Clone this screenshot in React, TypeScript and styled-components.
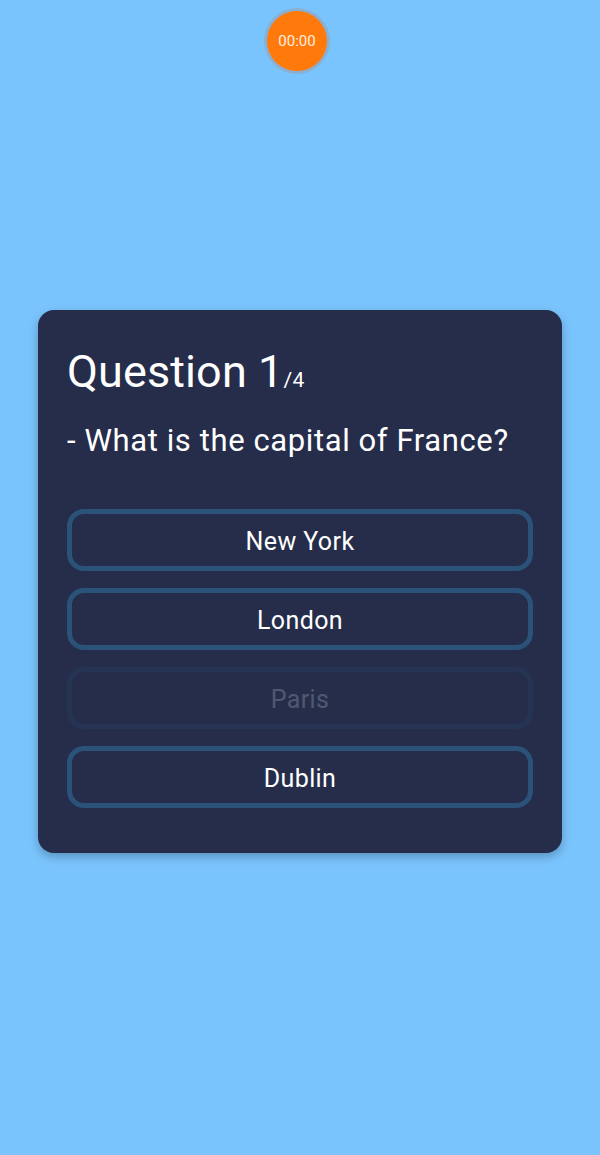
import React from "react";
import styled, { createGlobalStyle } from "styled-components";

const GlobalStyle = createGlobalStyle`
  html, body {
    margin: 0;
    padding: 0;
    background: #7ac4fd;
    font-family: Roboto, "Noto Sans", sans-serif;
  }
  #root {
    min-height: 1155px;
  }
`;

const Page = styled.div`
  width: 600px;
  min-height: 1155px;
  background: #7ac4fd;
  display: flex;
  flex-direction: column;
  align-items: center;
  box-sizing: border-box;
  padding-top: 11px;
`;

const Timer = styled.div`
  width: 60px;
  height: 60px;
  border-radius: 50%;
  background: #ff7a0a;
  box-shadow: 0 0 0 3px rgba(150, 160, 175, 0.55);
  color: #ffeee0;
  font-size: 15px;
  display: flex;
  align-items: center;
  justify-content: center;
  margin-left: -6px;
`;

const Card = styled.div`
  margin-top: 239px;
  width: 524px;
  box-sizing: border-box;
  background: #252d4b;
  border-radius: 16px;
  box-shadow: 0 4px 10px rgba(0, 0, 0, 0.25);
  padding: 36px 29px 45px 29px;
  display: flex;
  flex-direction: column;
`;

const Title = styled.h1`
  margin: 0;
  color: #ffffff;
  font-weight: 400;
  font-size: 45px;
  line-height: 52px;
  letter-spacing: 0.1px;
`;

const Total = styled.span`
  font-size: 21px;
  letter-spacing: 0.3px;
`;

const QuestionText = styled.p`
  margin: 15px 0 0 0;
  color: #ffffff;
  font-size: 31px;
  line-height: 40px;
  letter-spacing: 0.6px;
`;

const Answers = styled.div`
  margin-top: 48px;
  display: flex;
  flex-direction: column;
  gap: 17px;
`;

const Answer = styled.button<{ $faded?: boolean }>`
  height: 62px;
  box-sizing: border-box;
  border: 5px solid #2b5279;
  border-radius: 17px;
  background: transparent;
  color: #ffffff;
  font-family: Roboto, "Noto Sans", sans-serif;
  font-size: 25px;
  letter-spacing: 0.4px;
  display: flex;
  align-items: center;
  justify-content: center;
  padding: 3px 0 0 0;
  opacity: ${(p) => (p.$faded ? 0.2 : 1)};
`;

const answers = [
  { label: "New York" },
  { label: "London" },
  { label: "Paris", faded: true },
  { label: "Dublin" },
];

export default function App() {
  return (
    <>
      <GlobalStyle />
      <Page>
        <Timer>00:00</Timer>
        <Card>
          <Title>
            Question 1<Total>/4</Total>
          </Title>
          <QuestionText>- What is the capital of France?</QuestionText>
          <Answers>
            {answers.map((a) => (
              <Answer key={a.label} $faded={a.faded}>
                {a.label}
              </Answer>
            ))}
          </Answers>
        </Card>
      </Page>
    </>
  );
}
